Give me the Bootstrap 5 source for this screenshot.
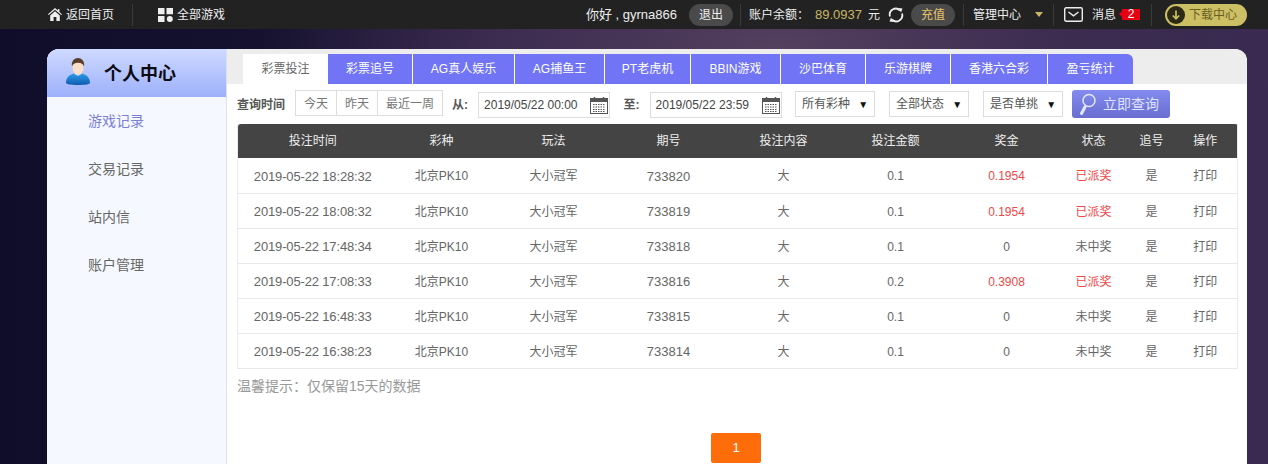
<!DOCTYPE html>
<html lang="zh">
<head>
  <meta charset="UTF-8">
  <meta name="viewport" content="width=device-width, initial-scale=1.0">
  <title>个人中心</title>
  <link href="https://cdn.jsdelivr.net/npm/bootstrap@5.3.0/dist/css/bootstrap.min.css" rel="stylesheet">
  <style>
    html, body { height: 464px; overflow: hidden; }
    body {
      font-family: "Liberation Sans", "Noto Sans CJK SC", sans-serif;
      font-size: 13px;
      color: #666;
      background: radial-gradient(ellipse 520px 200px at 780px 50px, #54405f 0%, #3c2c50 55%, transparent 100%),
                  linear-gradient(90deg, #0f0d2a 0%, #1a1533 35%, #33264a 65%, #3a2a52 100%);
    }
    .topbar { height: 29px; background: #222; color: #eee; font-size: 12px; padding-left: 48px; padding-right: 21px; }
    .topbar svg { flex-shrink: 0; }
    .top-sep { width: 1px; height: 22px; background: #3a3a3a; }
    .top-pill { height: 22px; width: 44px; text-align: center; border-radius: 11px; background: #4a4a4a; line-height: 22px; }
    .top-num { font-size: 13px; }
    .gold { color: #c9b765; }
    .pay { color: #e8c56a; }
    .caret-down { width: 0; height: 0; border-left: 4px solid transparent; border-right: 4px solid transparent; border-top: 5px solid #c9b765; }
    .msg-count { background: #e60012; color: #fff; width: 18px; height: 11px; line-height: 11px; text-align: center; font-size: 12px; position: relative; }
    .msg-count::before { content: ""; position: absolute; left: -3px; top: 2px; border-top: 3px solid transparent; border-bottom: 3px solid transparent; border-right: 3px solid #e60012; }
    .dl-btn { height: 22px; width: 82px; border-radius: 11px; background: #cdbf64; color: #6a5e22; padding-left: 2px; }
    .ml-4px { margin-left: 4px; } .ml-6 { margin-left: 6px; } .ml-7 { margin-left: 7px; } .ml-8 { margin-left: 8px; }
    .ml-9 { margin-left: 9px; } .ml-10 { margin-left: 10px; } .ml-11 { margin-left: 11px; } .ml-12 { margin-left: 12px; }
    .ml-13 { margin-left: 13px; } .ml-14 { margin-left: 14px; } .ml-18 { margin-left: 18px; } .ml-25 { margin-left: 25px; }
    .panel-wrap { margin: 20px 21px 0 47px; height: 415px; border-radius: 12px 12px 0 0; overflow: hidden; background: #fff; }
    .side { width: 180px; flex-shrink: 0; background: #f5f9ff; border-right: 1px solid #d9e0ee; }
    .side-head { height: 48px; padding: 3px 0 0 19px; background: linear-gradient(180deg, #cfdaff 0%, #9cb0fb 100%); color: #0c0c14; font-size: 18px; font-weight: 700; }
    .side-head svg { margin-bottom: 6px; }
    .side-link { height: 48px; line-height: 48px; padding-left: 41px; font-size: 14px; color: #666; text-decoration: none; display: block; }
    .side-link.on { color: #7c7fd8; }
    .main-col { min-width: 0; }
    .tab-strip { height: 35px; padding: 5px 0 0 16px; background: #ededed; }
    .tab-item { height: 30px; line-height: 30px; text-align: center; background: #7175f5; color: #fff; font-size: 12px; border-right: 1px solid #fff; }
    .tab-item.on { background: #fff; color: #666; border-right: 0; }
    .tab-item.last { border-top-right-radius: 6px; border-right: 0; }
    .tw1 { width: 85px; } .tw2 { width: 85px; } .tw3 { width: 102px; } .tw4 { width: 90px; } .tw5 { width: 86px; }
    .tw6 { width: 90px; } .tw7 { width: 85px; } .tw8 { width: 85px; } .tw9 { width: 97px; } .tw10 { width: 85px; }
    .query-row { height: 40px; padding: 6px 0 0 10px; font-size: 12px; }
    .query-label { font-weight: 700; color: #555; margin-top: 6px; }
    .quick-group { margin-left: 10px; margin-right: 9px; border: 1px solid #ddd; height: 26px; }
    .quick-group span { padding: 0 8px; line-height: 27px; height: 24px; border-left: 1px solid #ddd; color: #777; }
    .quick-group span:first-child { border-left: 0; }
    .date-box { height: 26px; width: 132px; border: 1px solid #ddd; padding: 0 1px 0 5px; color: #444; margin: 2px 13.5px 0 10px; }
    .sel-box { height: 26px; width: 80px; border: 1px solid #ddd; padding: 0 6px; color: #555; margin: 1px 14px 0 0; }
    .sel-arrow { font-size: 10px; color: #111; }
    .search-btn { width: 98px; height: 28px; flex-shrink: 0; border-radius: 3px; background: linear-gradient(180deg, #838bf0, #696ecf); color: #dfe3ff; font-size: 14px; margin-left: -5px; padding-left: 7px; }
    .search-btn span { margin-left: 7px; }
    .table-wrap { margin: 0 10px; }
    .bet-table { table-layout: fixed; width: 1000px; margin: 0; text-align: center; border: 1px solid #e9e9e9; border-top: 0; font-size: 12px; }
    .bet-table th { background: #444; color: #eee; height: 34px; padding: 0; font-weight: 400; vertical-align: middle; border: 0; }
    .bet-table thead th:first-child { border-top-left-radius: 3px; }
    .bet-table thead th:last-child { border-top-right-radius: 3px; padding-right: 6px; }
    .bet-table td { height: 35px; padding: 2px 0 0; vertical-align: middle; color: #666; border-bottom: 1px solid #e9e9e9; }
    .bet-table td:first-child { font-size: 13px; letter-spacing: -.15px; }
    .bet-table td:nth-child(4) { font-size: 13px; }
    .bet-table td:last-child { padding-right: 6px; }
    .bet-table td.win { color: #f04848; }
    .c1 { width: 150px; } .c2 { width: 108px; } .c3 { width: 116px; } .c4 { width: 114px; } .c5 { width: 116px; }
    .c6 { width: 108px; } .c7 { width: 114px; } .c8 { width: 60px; } .c9 { width: 56px; } .c10 { width: 58px; }
    .tip-text { margin: 8px 0 0 10px; font-size: 14px; color: #999; line-height: 18px; }
    .page-btn { width: 50px; height: 30px; line-height: 30px; background: #ff6c0a; color: #fff; text-align: center; border-radius: 2px; margin-top: 38px; margin-left: 484px; }
  </style>
</head>
<body>
  <div class="topbar d-flex align-items-center">
    <svg width="14" height="13" viewBox="0 0 14 13"><path fill="#eee" d="M7 0 0 6.200l.8.9L7 1.700l6.200 5.400.8-.9-2.600-2.300V1H10v1.600zM2.200 7.600V13h3.400V9h2.800v4h3.400V7.600L7 3.300z"/></svg>
    <span class="ml-4px">返回首页</span>
    <span class="top-sep ml-18"></span>
    <svg class="ml-25" width="15" height="14" viewBox="0 0 15 14"><path fill="#eee" d="M0 0h6.500v6.200H0zM8.500 0H15v6.200H8.500zM0 8h6.500v6H0z"/><circle fill="#eee" cx="11.800" cy="11" r="3"/></svg>
    <span class="ml-4px">全部游戏</span>
    <span class="ms-auto top-num">你好 , gyrna866</span>
    <span class="top-pill ml-12">退出</span>
    <span class="top-sep ml-7"></span>
    <span class="ml-8">账户余额：</span>
    <span class="gold top-num ml-6">89.0937</span>
    <span class="ml-6">元</span>
    <svg class="ml-8" width="16" height="16" viewBox="0 0 16 16" fill="none" stroke="#eee" stroke-width="1.800"><path d="M2 9.500A6 6 0 0 1 12 3.500"/><path d="M14 6.500A6 6 0 0 1 4 12.500"/><path fill="#eee" stroke="none" d="M10.500 1 14.500 1.500 13 5.500zM5.500 15 1.500 14.500 3 10.500z"/></svg>
    <span class="top-pill pay ml-7">充值</span>
    <span class="top-sep ml-8"></span>
    <span class="ml-9">管理中心</span>
    <span class="caret-down ml-14"></span>
    <span class="top-sep ml-10"></span>
    <svg class="ml-10" width="19" height="15" viewBox="0 0 19 15" fill="none" stroke="#eee" stroke-width="1.400"><rect x=".7" y=".7" width="17.600" height="13.600" rx="1.500"/><path d="m4.500 5 5 3.800 5-3.800"/></svg>
    <span class="ml-9">消息</span>
    <span class="msg-count ml-6">2</span>
    <span class="top-sep ml-11"></span>
    <div class="dl-btn d-flex align-items-center ml-13">
      <svg width="18" height="18" viewBox="0 0 18 18"><circle cx="9" cy="9" r="9" fill="#2c2a16"/><path fill="none" stroke="#cdbf64" stroke-width="1.700" d="M9 4.500v8M5.800 9.500 9 12.700l3.200-3.200"/></svg>
      <span class="ml-4px">下载中心</span>
    </div>
  </div>

  <div class="panel-wrap d-flex">
    <div class="side">
      <div class="side-head d-flex align-items-center">
        <svg width="24" height="27" viewBox="0 0 24 27">
          <defs><linearGradient id="shirt" x1="0" y1="0" x2="0" y2="1"><stop offset="0" stop-color="#2f9bea"/><stop offset="1" stop-color="#0f5cb0"/></linearGradient></defs>
          <path fill="url(#shirt)" d="M0 25c0-5 3-8 7.500-9.500L12 18l4.500-2.500C21 17 24 20 24 25c0 1-4 2-12 2S0 26 0 25z"/>
          <ellipse cx="12" cy="9.500" rx="5.500" ry="7.500" fill="#f9dfc8"/>
          <path fill="#5a3f2c" d="M6 8.500C5 3 8.500 0 12 0s7 3 6 8.500C17 6 15.500 5 12 4.800 8.500 5 7 6 6 8.500z"/>
        </svg>
        <span class="ml-14">个人中心</span>
      </div>
      <a class="side-link on" href="#">游戏记录</a>
      <a class="side-link" href="#">交易记录</a>
      <a class="side-link" href="#">站内信</a>
      <a class="side-link" href="#">账户管理</a>
    </div>

    <div class="main-col flex-grow-1">
      <div class="tab-strip d-flex">
        <div class="tab-item on tw1">彩票投注</div>
        <div class="tab-item tw2">彩票追号</div>
        <div class="tab-item tw3">AG真人娱乐</div>
        <div class="tab-item tw4">AG捕鱼王</div>
        <div class="tab-item tw5">PT老虎机</div>
        <div class="tab-item tw6">BBIN游戏</div>
        <div class="tab-item tw7">沙巴体育</div>
        <div class="tab-item tw8">乐游棋牌</div>
        <div class="tab-item tw9">香港六合彩</div>
        <div class="tab-item last tw10">盈亏统计</div>
      </div>

      <div class="query-row d-flex align-items-start">
        <span class="query-label">查询时间</span>
        <div class="quick-group d-flex"><span>今天</span><span>昨天</span><span>最近一周</span></div>
        <span class="query-label">从:</span>
        <div class="date-box d-flex align-items-center justify-content-between">
          <span>2019/05/22 00:00</span>
          <svg width="18" height="18" viewBox="0 0 18 18"><rect x=".5" y="2.500" width="17" height="15" fill="#fff" stroke="#555"/><rect x="1" y="3" width="16" height="3" fill="#555"/><path stroke="#555" stroke-width="1.500" d="M4.500 1v3M13.500 1v3"/><path stroke="#555" stroke-dasharray="1.500 1" d="M3 8.500h12M3 11h12M3 13.500h12M3 15.500h12"/></svg>
        </div>
        <span class="query-label">至:</span>
        <div class="date-box d-flex align-items-center justify-content-between">
          <span>2019/05/22 23:59</span>
          <svg width="18" height="18" viewBox="0 0 18 18"><rect x=".5" y="2.500" width="17" height="15" fill="#fff" stroke="#555"/><rect x="1" y="3" width="16" height="3" fill="#555"/><path stroke="#555" stroke-width="1.500" d="M4.500 1v3M13.500 1v3"/><path stroke="#555" stroke-dasharray="1.500 1" d="M3 8.500h12M3 11h12M3 13.500h12M3 15.500h12"/></svg>
        </div>
        <div class="sel-box d-flex align-items-center justify-content-between"><span>所有彩种</span><span class="sel-arrow">▼</span></div>
        <div class="sel-box d-flex align-items-center justify-content-between"><span>全部状态</span><span class="sel-arrow">▼</span></div>
        <div class="sel-box d-flex align-items-center justify-content-between"><span>是否单挑</span><span class="sel-arrow">▼</span></div>
        <div class="search-btn d-flex align-items-center">
          <svg width="17" height="23" viewBox="0 0 17 23" fill="none" stroke="#e4e8ff" stroke-width="1.500"><circle cx="10" cy="7.500" r="6"/><path stroke-width="3" stroke-linecap="round" d="M6 14 2.500 20.500"/></svg>
          <span>立即查询</span>
        </div>
      </div>

      <div class="table-wrap">
        <table class="table bet-table">
          <thead>
            <tr>
              <th class="c1">投注时间</th><th class="c2">彩种</th><th class="c3">玩法</th><th class="c4">期号</th><th class="c5">投注内容</th>
              <th class="c6">投注金额</th><th class="c7">奖金</th><th class="c8">状态</th><th class="c9">追号</th><th class="c10">操作</th>
            </tr>
          </thead>
          <tbody>
            <tr><td>2019-05-22 18:28:32</td><td>北京PK10</td><td>大小冠军</td><td>733820</td><td>大</td><td>0.1</td><td class="win">0.1954</td><td class="win">已派奖</td><td>是</td><td>打印</td></tr>
            <tr><td>2019-05-22 18:08:32</td><td>北京PK10</td><td>大小冠军</td><td>733819</td><td>大</td><td>0.1</td><td class="win">0.1954</td><td class="win">已派奖</td><td>是</td><td>打印</td></tr>
            <tr><td>2019-05-22 17:48:34</td><td>北京PK10</td><td>大小冠军</td><td>733818</td><td>大</td><td>0.1</td><td>0</td><td>未中奖</td><td>是</td><td>打印</td></tr>
            <tr><td>2019-05-22 17:08:33</td><td>北京PK10</td><td>大小冠军</td><td>733816</td><td>大</td><td>0.2</td><td class="win">0.3908</td><td class="win">已派奖</td><td>是</td><td>打印</td></tr>
            <tr><td>2019-05-22 16:48:33</td><td>北京PK10</td><td>大小冠军</td><td>733815</td><td>大</td><td>0.1</td><td>0</td><td>未中奖</td><td>是</td><td>打印</td></tr>
            <tr><td>2019-05-22 16:38:23</td><td>北京PK10</td><td>大小冠军</td><td>733814</td><td>大</td><td>0.1</td><td>0</td><td>未中奖</td><td>是</td><td>打印</td></tr>
          </tbody>
        </table>
      </div>
      <div class="tip-text">温馨提示：仅保留15天的数据</div>
      <div class="page-btn">1</div>
    </div>
  </div>
  <script src="https://cdn.jsdelivr.net/npm/bootstrap@5.3.0/dist/js/bootstrap.bundle.min.js"></script>
</body>
</html>
